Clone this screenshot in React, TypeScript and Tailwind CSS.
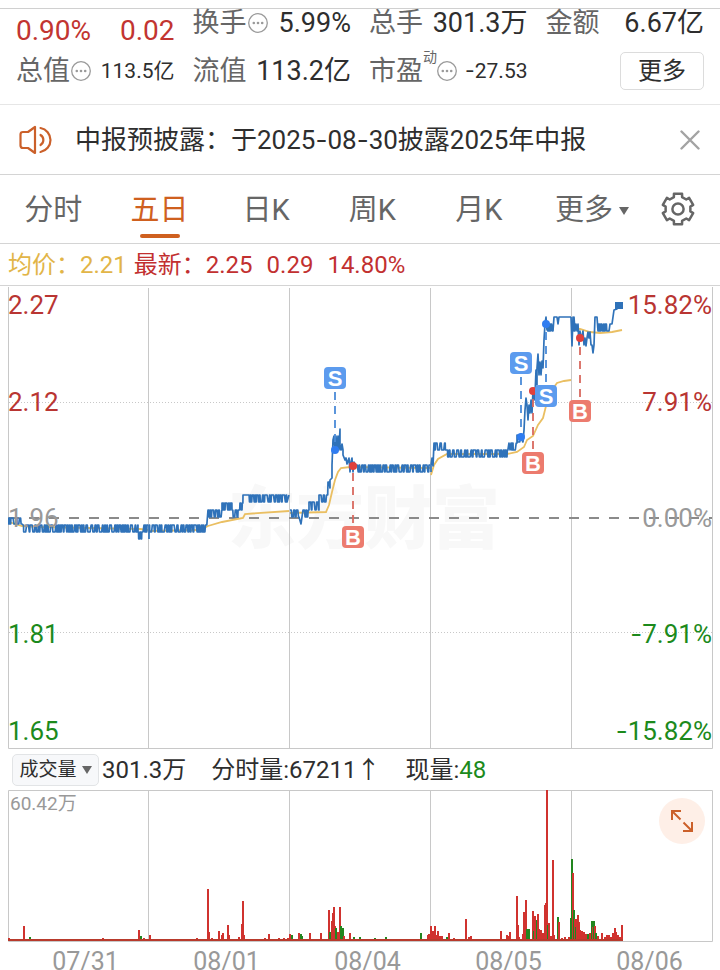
import { Fragment } from 'react';
import type { ReactNode } from 'react';

const RED = '#d0332f';
const GREEN = '#22861f';
const BLUE = '#2f72b9';
const GOLD = '#eabf62';

/* Alternates between two neighbouring price ticks, as thinly traded minutes do. */
function band(x0: number, x1: number, hi: number, lo: number, seed = 1): string {
  let state = seed * 7919;
  let x = x0;
  let up = true;
  let out = '';
  while (x < x1) {
    state = (state * 16807) % 2147483647;
    const r = state / 2147483647;
    const step = 0.7 + r * r * r * 2.6;
    const y = up ? hi : lo;
    out += ` ${x.toFixed(1)},${y} ${Math.min(x + step * 0.7, x1).toFixed(1)},${y}`;
    x += step;
    up = !up;
  }
  return out;
}

const priceDays = [
  band(8, 22, 518, 524, 2) + band(23, 138, 525, 532, 3) + band(138, 143, 532, 539, 4) + band(144, 148, 525, 532, 5),
  '149,539' +
    band(149, 207, 525, 532, 6) +
    band(208, 222, 510, 517, 7) +
    band(222, 232, 503, 510, 8) +
    band(232, 240, 510, 517, 9) +
    band(240, 243, 503, 510, 10) +
    ' 243,495 248,495' +
    band(248, 287, 495, 502, 11) +
    ' 289,495',
  band(290, 299, 510, 517, 12) +
    ' 301,524 302,517' +
    band(303, 309, 510, 517, 13) +
    band(309, 319, 502, 510, 14) +
    band(319, 328, 495, 502, 15) +
    ' 328,482 329,482 330,488 330,480 332,478 332,465 333,440 334,436 335,452 336,436 337,450 338,436 339,450 340,429 340,445 341,450 342,444 343,450 343,455 345,460 346,458 347,464 349,458 350,472 351,462 352,458 353,472 354,462' +
    band(355, 430, 465, 472, 16),
  '431,472 431,465 432,458 433,466' +
    band(434, 447, 443, 450, 17) +
    band(447, 508, 450, 457, 18) +
    ' 509,443 510,450' +
    band(511, 517, 443, 450, 19) +
    band(517, 523, 435, 442, 20) +
    ' 524,430 525,410 526,398 527,405 528,420 529,405 530,413 531,400 532,413 533,390 534,400 535,395 536,370 537,385 537,368 538,354 539,375 540,362 541,375 542,361 543,368 544,340 545,324 546,317 547,330' +
    band(547, 553, 324, 331, 21) +
    ' 554,317 557,317 558,324 559,317 571,317',
  '571,317 572,346 573,317 574,331 574,317 575,331 576,324 577,331 578,324 579,345 580,331 581,340 583,331 584,345 585,338 586,346 587,338 588,332 589,338 590,332 591,345 592,345 593,353 594,345 595,317 597,317 598,331' +
    band(598, 607, 324, 331, 22) +
    ' 609,331 610,324 612,324 613,317 614,310 617,309 617,303 622,303',
];

const averageDays = [
  '9,522 22,526 40,527 140,529 148,530',
  '149,531 200,530 208,526 222,522 243,518 245,514 289,511',
  '290,513 326,512 329,505 332,492 335,480 338,472 341,468 350,467 430,468',
  '431,475 434,465 438,459 447,454 507,454 517,452 524,447 527,440 533,436 538,425 543,418 546,406 552,390 557,383 564,381 571,380',
  '572,328 580,329 590,332 600,333 612,332 622,330',
];

const trades = [
  { kind: 'S', x: 335, badge: 378, dot: 450 },
  { kind: 'B', x: 353, badge: 537, dot: 466 },
  { kind: 'S', x: 521, badge: 363, dot: 437 },
  { kind: 'B', x: 533, badge: 463, dot: 391 },
  { kind: 'S', x: 546, badge: 396, dot: 324 },
  { kind: 'B', x: 580, badge: 411, dot: 338 },
];

/* [x, top, colour] of each minute's volume bar */
const volume: [number, number, 'r' | 'g'][] = [
  [9, 938, 'r'], [24, 926, 'r'], [30, 937, 'g'], [103, 938, 'r'], [139, 930, 'r'], [141, 936, 'g'], [144, 938, 'r'], [150, 935, 'r'],
  [197, 938, 'r'], [208, 889, 'r'], [209, 932, 'r'], [212, 938, 'r'], [219, 931, 'r'], [222, 935, 'r'], [223, 933, 'r'], [228, 925, 'r'],
  [229, 935, 'r'], [239, 937, 'r'], [242, 924, 'r'], [243, 901, 'r'], [244, 935, 'r'], [265, 938, 'r'], [269, 934, 'r'], [279, 938, 'r'],
  [284, 938, 'r'], [288, 938, 'r'], [290, 934, 'r'], [292, 935, 'g'], [299, 933, 'r'], [301, 934, 'g'], [302, 936, 'g'], [310, 933, 'r'],
  [321, 933, 'r'], [329, 910, 'r'], [330, 932, 'g'], [332, 921, 'r'], [333, 913, 'r'], [334, 907, 'r'], [335, 926, 'r'], [336, 928, 'g'],
  [338, 932, 'r'], [340, 907, 'r'], [341, 926, 'g'], [342, 930, 'g'], [343, 928, 'g'], [344, 936, 'r'], [350, 933, 'r'], [354, 937, 'g'],
  [360, 937, 'g'], [375, 938, 'g'], [386, 937, 'g'], [421, 933, 'g'], [428, 935, 'r'], [429, 934, 'r'], [431, 926, 'r'], [432, 935, 'r'],
  [433, 931, 'r'], [435, 926, 'r'], [436, 935, 'r'], [438, 931, 'r'], [440, 936, 'r'], [442, 936, 'r'], [447, 937, 'g'], [449, 933, 'r'],
  [454, 938, 'r'], [466, 919, 'r'], [469, 937, 'r'], [471, 936, 'r'], [501, 931, 'r'], [507, 935, 'r'], [509, 936, 'r'], [510, 932, 'r'],
  [517, 896, 'r'], [518, 925, 'r'], [519, 937, 'r'], [523, 934, 'r'], [524, 912, 'r'], [526, 900, 'r'], [527, 929, 'g'], [528, 929, 'g'],
  [529, 929, 'g'], [533, 911, 'r'], [534, 931, 'g'], [535, 916, 'r'], [536, 930, 'r'], [537, 920, 'g'], [538, 914, 'r'], [539, 929, 'r'],
  [541, 930, 'r'], [543, 933, 'r'], [545, 905, 'r'], [546, 903, 'r'], [547, 790, 'r'], [548, 925, 'g'], [549, 923, 'r'], [551, 936, 'r'],
  [553, 860, 'r'], [554, 935, 'r'], [558, 917, 'g'], [559, 922, 'r'], [562, 938, 'r'], [565, 937, 'r'], [569, 937, 'r'], [571, 918, 'g'],
  [572, 859, 'g'], [573, 873, 'r'], [574, 910, 'g'], [575, 919, 'r'], [576, 927, 'g'], [577, 919, 'r'], [578, 915, 'r'], [579, 922, 'r'],
  [580, 930, 'r'], [582, 931, 'r'], [584, 932, 'r'], [586, 934, 'r'], [588, 934, 'g'], [590, 933, 'r'], [592, 921, 'g'], [593, 927, 'r'],
  [594, 921, 'g'], [595, 926, 'r'], [596, 933, 'g'], [598, 936, 'r'], [602, 933, 'r'], [605, 937, 'r'], [607, 935, 'r'], [609, 935, 'r'],
  [611, 937, 'r'], [613, 933, 'r'], [615, 928, 'r'], [616, 932, 'r'], [618, 935, 'r'], [620, 937, 'r'], [622, 925, 'r'],
];

const dividers = [149, 290, 431, 572];

/* Sets hyphens in a face whose hyphen is as wide as the figures call for. */
function Figures({ children }: { children: string }) {
  return (
    <>
      {children.split('-').map((part, i) => (
        <Fragment key={i}>
          {i > 0 && <span className="font-[Inter]">-</span>}
          {part}
        </Fragment>
      ))}
    </>
  );
}

function InfoDots() {
  return (
    <svg viewBox="0 0 22 22" className="size-[22px] shrink-0" fill="#9a9a9a" aria-hidden="true">
      <circle cx="11" cy="11" r="9.3" fill="none" stroke="#9a9a9a" strokeWidth="1.3" />
      <circle cx="6.8" cy="11" r="1.3" />
      <circle cx="11" cy="11" r="1.3" />
      <circle cx="15.2" cy="11" r="1.3" />
    </svg>
  );
}

function Stat({ label, value, info, note, small }: { label: string; value: string; info?: boolean; note?: string; small?: boolean }) {
  return (
    <div className="flex items-center justify-between whitespace-nowrap text-[27px] leading-[28px]">
      <span className="flex items-center text-[#666]">
        {label}
        {note && <sup className="-mr-px self-start text-[14px] leading-none">{note}</sup>}
        {info && <InfoDots />}
      </span>
      <span className={small ? 'text-[21px] text-[#2e2e2e]' : 'text-[#2e2e2e]'}>
        <Figures>{value}</Figures>
      </span>
    </div>
  );
}

function Caret({ className }: { className: string }) {
  return (
    <svg viewBox="0 0 10 8" className={className} fill="currentColor" aria-hidden="true">
      <path d="M0 0h10L5 8z" />
    </svg>
  );
}

function Summary() {
  return (
    <section className="mt-2 grid grid-cols-4 gap-x-[18px] gap-y-[7px] border-y border-t-[#d0d0d0] border-b-[#e6e6e6] px-4 pb-[14px]">
      <div className="flex justify-between pt-2 text-[28px] leading-[28px] text-[#c23531]">
        <span>0.90%</span>
        <span>0.02</span>
      </div>
      <div><Stat label="换手" value="5.99%" info /></div>
      <div><Stat label="总手" value="301.3万" /></div>
      <div><Stat label="金额" value="6.67亿" /></div>
      <Stat label="总值" value="113.5亿" info small />
      <Stat label="流值" value="113.2亿" />
      <Stat label="市盈" value="-27.53" note="动" info small />
      <button type="button" className="h-[38px] w-[84px] justify-self-end rounded-[5px] border border-[#dcdcdc] text-[24px] leading-[34px] text-[#2e2e2e]">
        更多
      </button>
    </section>
  );
}

function Notice() {
  return (
    <section className="flex h-[70px] items-center border-b border-[#d4d4d4] pr-[20px] pl-[18px]">
      <svg viewBox="0 0 36 32" className="h-8 w-9 shrink-0" fill="none" stroke="#cb602a" strokeWidth="2.2" strokeLinecap="round" strokeLinejoin="round" aria-hidden="true">
        <path d="M17 3v26l-7-5H5q-2.500 0-2.500-2.500v-11Q2.500 8 5 8h5z" />
        <path d="M22.500 11a5.800 5.800 0 0 1 0 10M22.500 4a12.200 12.200 0 0 1 0 24" />
      </svg>
      <p className="ml-[21px] grow text-[26px] text-[#2e2e2e]">
        <Figures>中报预披露：于2025-08-30披露2025年中报</Figures>
      </p>
      <button type="button" aria-label="关闭">
        <svg viewBox="0 0 20 20" className="size-5" stroke="#a3a3a3" strokeWidth="2.400" strokeLinecap="round" aria-hidden="true">
          <path d="M1.500 1.500l17 17M18.500 1.500l-17 17" />
        </svg>
      </button>
    </section>
  );
}

const gearPath = (() => {
  const pts: string[] = [];
  for (let i = 0; i < 6; i += 1) {
    const c = -90 + i * 60;
    for (const [r, d] of [[12.600, -19], [15.700, -15], [15.700, 15], [12.600, 19]]) {
      const a = ((c + d) * Math.PI) / 180;
      pts.push(`${(17 + r * Math.cos(a)).toFixed(2)} ${(17 + r * Math.sin(a)).toFixed(2)}`);
    }
  }
  return `M${pts.join('L')}Z`;
})();

function Tabs() {
  const tab = 'relative flex h-full flex-1 items-center justify-center pt-1';
  return (
    <nav className="flex h-[69px] items-center border-b border-[#d4d4d4] pr-4 text-[29px] text-[#666]">
      <button type="button" className={tab}>分时</button>
      <button type="button" aria-current="page" className={`${tab} text-[#cf601f]`}>
        五日
        <span className="absolute bottom-[5px] left-1/2 h-1 w-10 -translate-x-1/2 rounded-full bg-[#cf601f]" />
      </button>
      <button type="button" className={tab}>日K</button>
      <button type="button" className={tab}>周K</button>
      <button type="button" className={tab}>月K</button>
      <button type="button" className="flex h-full w-[120px] items-center justify-center gap-[6px] pt-1">
        更多
        <Caret className="h-2 w-[10px]" />
      </button>
      <button type="button" aria-label="设置" className="flex w-[52px] justify-center">
        <svg viewBox="0 0 34 34" className="size-[34px]" fill="none" stroke="#666" strokeWidth="2.500" strokeLinejoin="round" aria-hidden="true">
          <path d={gearPath} />
          <circle cx="17" cy="17" r="5.600" />
        </svg>
      </button>
    </nav>
  );
}

function AxisLabel({ className, children }: { className: string; children: ReactNode }) {
  return <span className={`absolute -translate-y-1/2 leading-[24px] ${className}`}>{children}</span>;
}

function PriceChart() {
  return (
    <section className="relative mr-[7px] ml-2 pb-px text-[26px]">
      <AxisLabel className="top-[4%] left-0 text-[#b93532]">2.27</AxisLabel>
      <AxisLabel className="top-1/4 left-0 text-[#b93532]">2.12</AxisLabel>
      <AxisLabel className="top-1/2 left-0 text-[#999]">1.96</AxisLabel>
      <AxisLabel className="top-3/4 left-0 text-[#1c8a1c]">1.81</AxisLabel>
      <AxisLabel className="top-[96%] left-0 text-[#1c8a1c]">1.65</AxisLabel>
      <AxisLabel className="top-[4%] right-px text-[#b93532]">15.82%</AxisLabel>
      <AxisLabel className="top-1/4 right-px text-[#b93532]">7.91%</AxisLabel>
      <AxisLabel className="top-1/2 right-px text-[#999]">0.00%</AxisLabel>
      <AxisLabel className="top-3/4 right-px text-[#1c8a1c]"><Figures>-7.91%</Figures></AxisLabel>
      <AxisLabel className="top-[96%] right-px text-[#1c8a1c]"><Figures>-15.82%</Figures></AxisLabel>
      <svg viewBox="8 286 705 463" className="relative -z-10 block h-auto w-full" fill="none" aria-label="五日走势">
        <text x="228" y="543" fontSize="68" fontWeight="900" fill="#f8f8f8" fontFamily="'Noto Sans CJK SC', sans-serif">东方财富</text>
        <g stroke="#c8c8c8">
          <path d="M8.500 287V748.500H712.500V287" />
          {dividers.map((x) => <path key={x} d={`M${x - 0.5} 288V748`} />)}
          <path d="M9 402.500H712M9 632.500H712" strokeDasharray="1 2" />
        </g>
        <path d="M9 518H712" stroke="#8a8a8a" strokeWidth="1.800" strokeDasharray="10 10" />
        {averageDays.map((d) => <polyline key={d} points={d} stroke={GOLD} strokeWidth="1.800" />)}
        {priceDays.map((d) => <polyline key={d} points={d} stroke={BLUE} strokeWidth="1.700" strokeLinejoin="round" />)}
        <rect x="615" y="302" width="8" height="7" fill={BLUE} />
        {trades.map(({ kind, x, badge, dot }) => {
          const sell = kind === 'S';
          return (
            <g key={x}>
              <path d={`M${x} ${badge}V${dot}`} stroke={sell ? '#4b8bd8' : '#d9695f'} strokeWidth="1.800" strokeDasharray="8 6" />
              <circle cx={x} cy={dot} r="4" fill={sell ? '#2f7cf0' : '#e0403c'} />
              <rect x={x - 11} y={badge - 11} width="22" height="22" rx="4" fill={sell ? '#5c9bee' : '#ec7b6e'} />
              <text x={x} y={badge + 8} textAnchor="middle" fontSize="22" fontWeight="700" fill="#fff" fontFamily="'Liberation Sans', sans-serif">{kind}</text>
            </g>
          );
        })}
      </svg>
    </section>
  );
}

function VolumeBar() {
  return (
    <section className="flex h-10 items-center pl-3 text-[24px] whitespace-nowrap text-[#2e2e2e]">
      <button type="button" className="flex h-8 w-[87px] items-center justify-center gap-[5px] rounded-[5px] border border-[#e2e4e6] bg-[#f7f8fa] text-[19px]">
        成交量
        <Caret className="h-2 w-[10px] text-[#666]" />
      </button>
      <span className="ml-[3px]">301.3万</span>
      <span className="ml-[25px]">分时量:67211↑</span>
      <span className="ml-[25px]">现量:<span className="text-[#1c8a1c]">48</span></span>
    </section>
  );
}

function VolumeChart() {
  return (
    <section className="relative mr-[7px] ml-2">
      <span className="absolute top-1 left-[2px] text-[19px] leading-5 text-[#999]">60.42万</span>
      <svg viewBox="8 790 705 152" className="block h-auto w-full" fill="none" aria-label="成交量">
        <g stroke="#c8c8c8">
          <path d="M8.500 790.500H712.500V941.500H8.500z" />
          {dividers.map((x) => <path key={x} d={`M${x - 0.5} 791V941`} />)}
        </g>
        {volume.map(([x, top, c]) => (
          <path key={x} d={`M${x} ${top}V941`} stroke={c === 'r' ? RED : GREEN} strokeWidth="2" />
        ))}
        <path d="M8 940H623" stroke="#b83a2c" strokeWidth="2" />
      </svg>
      <button type="button" aria-label="全屏" className="absolute top-2 right-2 flex size-[46px] items-center justify-center rounded-full bg-[#feefe7]">
        <svg viewBox="0 0 24 24" className="size-6" fill="none" stroke="#cb602a" strokeWidth="2" aria-hidden="true">
          <path d="M11 2H2v9M2 2l8.500 8.500M13 22h9v-9M22 22l-8.500-8.500" />
        </svg>
      </button>
    </section>
  );
}

export default function App() {
  return (
    <main className="relative z-0 w-full overflow-hidden bg-white font-[Roboto,'Noto_Sans_CJK_SC',sans-serif]">
      <Summary />
      <Notice />
      <Tabs />
      <section className="flex h-[42px] items-center border-b border-[#d4d4d4] pl-2 text-[24px] text-[#c23030]">
        <span className="text-[#e2b548]">均价：2.21</span>
        <span className="ml-[7px]">最新：2.25</span>
        <span className="ml-[14px]">0.29</span>
        <span className="ml-[14px]">14.80%</span>
      </section>
      <PriceChart />
      <VolumeBar />
      <VolumeChart />
      <ol className="grid h-7 grid-cols-5 overflow-hidden pt-[5px] pl-[15px] text-center text-[25px] leading-[30px] text-[#999]">
        {['07/31', '08/01', '08/04', '08/05', '08/06'].map((d) => <li key={d}>{d}</li>)}
      </ol>
    </main>
  );
}
